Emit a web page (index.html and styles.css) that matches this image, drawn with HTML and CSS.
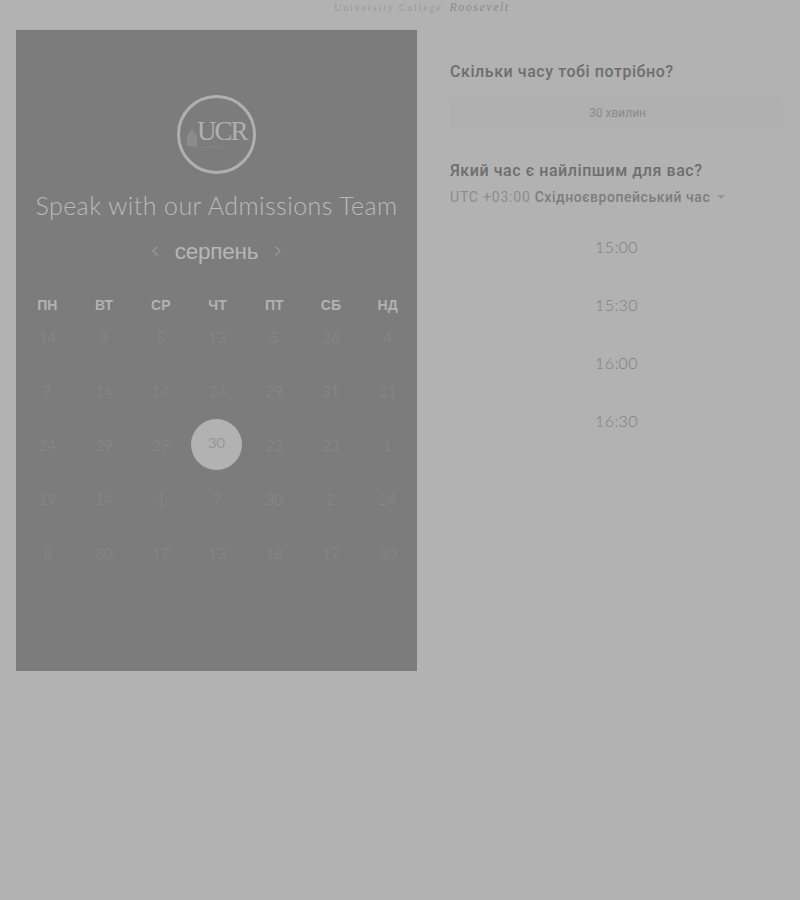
FILE: index.html
```html
<!DOCTYPE html>
<html lang="uk">
<head>
<meta charset="utf-8">
<title>Speak with our Admissions Team</title>
<link rel="stylesheet" href="styles.css">
</head>
<body>
<header class="brand">
  <span class="brand-main">University College</span>
  <span class="brand-script">Roosevelt</span>
</header>
<main class="layout">
  <section class="panel">
    <div class="logo">
      <svg class="tower" width="10" height="20" viewBox="0 0 11 22"><path d="M5.500 0L7 7H9V10H11V22H0V10H2V7H4Z" fill="#8c8c8c"/></svg>
      <span class="logo-text">UCR</span>
      <span class="logo-sub">University College Roosevelt</span>
    </div>
    <h1 class="title">Speak with our Admissions Team</h1>
    <div class="month">
      <svg class="chev" width="8" height="12" viewBox="0 0 8 12"><path d="M6.500 1.500L2 6l4.500 4.500" fill="none" stroke="#999" stroke-width="1.300"/></svg>
      <span class="month-name">серпень</span>
      <svg class="chev" width="8" height="12" viewBox="0 0 8 12"><path d="M1.500 1.500L6 6l-4.500 4.500" fill="none" stroke="#999" stroke-width="1.300"/></svg>
    </div>
    <div class="weekdays">
      <span>ПН</span><span>ВТ</span><span>СР</span><span>ЧТ</span><span>ПТ</span><span>СБ</span><span>НД</span>
    </div>
    <div class="days">
      <span>14</span><span>4</span><span>5</span><span>13</span><span>5</span><span>26</span><span>4</span>
      <span>7</span><span>14</span><span>14</span><span>24</span><span>29</span><span>31</span><span>21</span>
      <span>24</span><span>29</span><span>29</span><span class="selected">30</span><span>23</span><span>23</span><span>1</span>
      <span>19</span><span>14</span><span>1</span><span>7</span><span>30</span><span>2</span><span>24</span>
      <span>6</span><span>30</span><span>17</span><span>13</span><span>18</span><span>17</span><span>30</span>
    </div>
  </section>
  <section class="side">
    <h2 class="question">Скільки часу тобі потрібно?</h2>
    <div class="duration">30 хвилин</div>
    <h2 class="question question-time">Який час є найліпшим для вас?</h2>
    <div class="timezone">
      <span class="utc">UTC +03:00</span>
      <span class="zone">Східноєвропейський час</span>
      <span class="caret"></span>
    </div>
    <ul class="times">
      <li>15:00</li>
      <li>15:30</li>
      <li>16:00</li>
      <li>16:30</li>
    </ul>
  </section>
</main>
</body>
</html>
```
FILE: styles.css
```css
* { box-sizing: border-box; }
html, body { margin: 0; height: 100%; }
body {
  background: #b2b2b2;
  font-family: "Liberation Sans", Arial, sans-serif;
  min-height: 900px;
  overflow: hidden;
}
.brand {
  height: 30px;
  padding: 0 0 16px 44px;
  display: flex;
  justify-content: center;
  align-items: center;
  gap: 7px;
  font-family: "Liberation Serif", serif;
  color: #9a9a9a;
}
.brand-main { font-size: 10px; letter-spacing: 1.800px; }
.brand-script { font-size: 12px; font-style: italic; letter-spacing: 1.500px; color: #8a8a8a; }
.layout {
  display: flex;
  padding-left: 16px;
  border-bottom: 1px solid #afafaf;
  height: 645px;
}
.panel {
  width: 401px;
  height: 641px;
  background: #7c7c7c;
  padding-top: 65px;
  display: flex;
  flex-direction: column;
  align-items: center;
}
.logo {
  width: 79px;
  height: 79px;
  border: 3px solid #b0b0b0;
  border-radius: 50%;
  position: relative;
  flex: none;
}
.logo-text {
  position: absolute;
  left: 17px;
  top: 22px;
  font-family: "Liberation Serif", serif;
  font-size: 27px;
  letter-spacing: -2px;
  line-height: 22px;
  color: #b0b0b0;
}
.logo-sub {
  position: absolute;
  left: 11px;
  top: 48px;
  font-size: 2.500px;
  line-height: 3px;
  white-space: nowrap;
  color: #969696;
}
.tower { position: absolute; left: 7px; top: 28px; }
.title {
  margin: 16px 0 0;
  font-family: Lato, sans-serif;
  font-weight: 300;
  font-size: 25px;
  line-height: 30px;
  letter-spacing: 0.430px;
  color: #bababa;
  white-space: nowrap;
}
.month {
  margin-top: 19px;
  height: 26px;
  display: flex;
  align-items: center;
  gap: 16px;
}
.chev { margin-top: -2px; }
.month-name {
  font-size: 22.500px;
  letter-spacing: -0.200px;
  color: #b6b6b6;
}
.weekdays, .days {
  width: 397px;
  display: grid;
  grid-template-columns: repeat(7, 1fr);
  justify-items: center;
  margin-left: 2px;
}
.weekdays {
  margin-top: 32px;
  font-size: 14px;
  font-weight: 700;
  line-height: 16px;
  color: #b2b2b2;
}
.days {
  margin-top: -3px;
  grid-auto-rows: 54px;
  align-items: center;
  font-family: Lato, sans-serif;
  font-size: 15px;
  font-weight: 300;
  color: #8a8a8a;
}
.selected {
  width: 51px;
  height: 51px;
  margin: -2px 0 0 -2px;
  border-radius: 50%;
  background: #b2b2b2;
  color: #828282;
  font-size: 14.500px;
  padding-bottom: 3px;
  display: flex;
  align-items: center;
  justify-content: center;
}
.side {
  width: 333px;
  margin-left: 33px;
  padding-top: 33px;
}
.question {
  margin: 0;
  font-family: Roboto, sans-serif;
  font-size: 16px;
  font-weight: 500;
  line-height: 18px;
  letter-spacing: 0.560px;
  color: #6e6e6e;
}
.duration {
  margin-top: 16px;
  height: 31px;
  background: #b0b0b0;
  border-radius: 3px;
  display: flex;
  align-items: center;
  justify-content: center;
  font-family: Roboto, sans-serif;
  font-size: 12px;
  color: #8a8a8a;
  padding-left: 2px;
}
.question-time { margin-top: 34px; }
.timezone {
  margin-top: 8px;
  display: flex;
  align-items: center;
  height: 18px;
  font-family: Roboto, sans-serif;
  font-size: 14px;
  letter-spacing: 0.800px;
  white-space: nowrap;
}
.utc { color: #8c8c8c; margin-right: 4px; }
.zone { color: #7d7d7d; font-weight: 500; letter-spacing: 0.540px; }
.caret {
  margin-left: 7px;
  border-left: 4px solid transparent;
  border-right: 4px solid transparent;
  border-top: 4px solid #949494;
}
.times {
  list-style: none;
  margin: 12px 0 0;
  padding: 0;
}
.times li {
  height: 58px;
  line-height: 58px;
  text-align: center;
  font-family: Lato, sans-serif;
  font-size: 16px;
  font-weight: 300;
  letter-spacing: 0.400px;
  color: #808080;
}
```
